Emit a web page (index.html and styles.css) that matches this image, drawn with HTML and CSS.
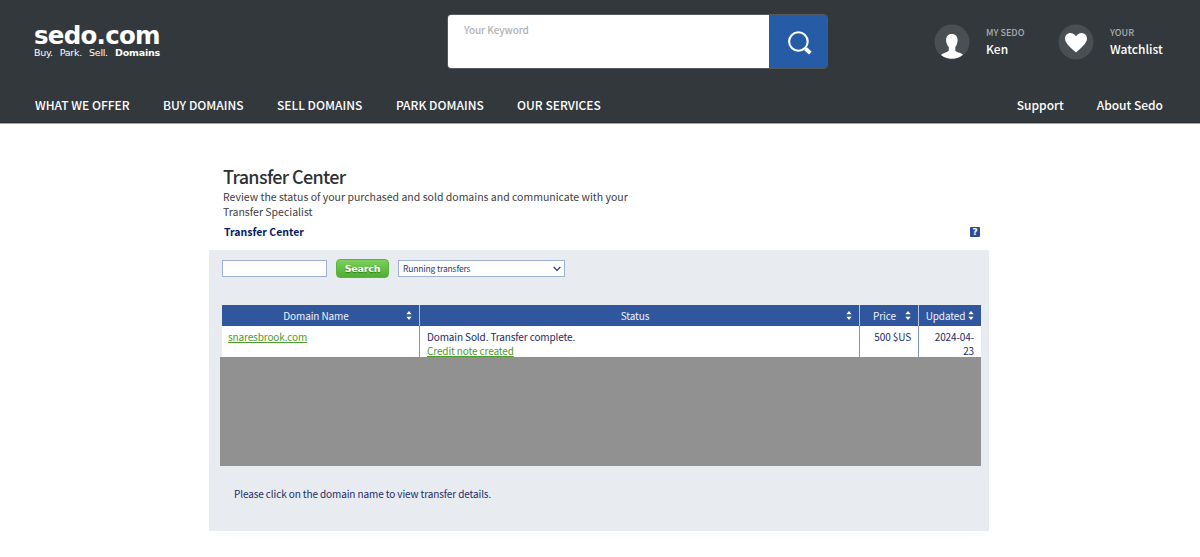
FILE: index.html
```html
<!DOCTYPE html>
<html lang="en">
<head>
<meta charset="utf-8">
<title>Transfer Center</title>
<link rel="stylesheet" href="styles.css">
</head>
<body>
<header class="site-header">
  <div class="masthead">
    <a class="logo"><span class="logo-name">sedo.com</span><span class="logo-tag"><span>Buy.</span><span>Park.</span><span>Sell.</span><b>Domains</b></span></a>
    <form class="keyword-search">
      <label class="keyword-field">Your Keyword</label>
      <button class="keyword-button" type="button" aria-label="Search">
        <svg width="24" height="24" viewBox="0 0 24 24" fill="none" stroke="#fff"><circle cx="10.4" cy="10.5" r="9.3" stroke-width="2.1"/><path d="M17.600 17.700l4.700 4.400" stroke-width="4"/></svg>
      </button>
    </form>
    <div class="account">
      <a class="account-item">
        <svg class="avatar" width="36" height="36" viewBox="0 0 36 36"><circle cx="18" cy="18" r="17.500" fill="#4a4f53"/><path fill="#fff" d="M17.800 10C21.700 10 23.600 12.600 23.600 16c0 3-1 5.600-2.300 7v3.500c.2 1.700 5.400 1.900 7.700 4.300A17.500 17.500 0 0 1 7 31c2.200-2.600 7.500-2.700 7.800-4.500V23c-1.500-1.400-2.700-4-2.700-7 0-3.400 1.800-6 5.700-6z"/></svg>
        <span class="account-text"><small>MY SEDO</small><strong>Ken</strong></span>
      </a>
      <a class="account-item">
        <svg class="avatar" width="36" height="36" viewBox="0 0 36 36"><circle cx="18" cy="18" r="17.500" fill="#4a4f53"/><path fill="#fff" d="M18 28.500C14 25 7 19.800 7 14.600 7 11.200 9.500 9 12.400 9c2.300 0 4.500 1.200 5.600 3.500C19.100 10.200 21.200 9 23.500 9c3 0 5.500 2.200 5.500 5.600 0 5.200-7 10.400-11 13.900z"/></svg>
        <span class="account-text"><small>YOUR</small><strong>Watchlist</strong></span>
      </a>
    </div>
  </div>
  <nav class="main-nav">
    <a class="n1">WHAT WE OFFER</a><a class="n2">BUY DOMAINS</a><a class="n3">SELL DOMAINS</a><a class="n4">PARK DOMAINS</a><a class="n5">OUR SERVICES</a>
    <a class="support">Support</a><a class="about">About Sedo</a>
  </nav>
</header>
<main class="content">
  <h1>Transfer Center</h1>
  <p class="intro">Review the status of your purchased and sold domains and communicate with your<br>Transfer Specialist</p>
  <div class="section-bar"><h2>Transfer Center</h2><span class="help">?</span></div>
  <section class="panel">
    <form class="filters">
      <input class="filter-input" type="text" aria-label="Domain">
      <button class="filter-button" type="button">Search</button>
      <div class="filter-select"><span>Running transfers</span><svg width="8" height="6" viewBox="0 0 8 6" fill="none" stroke="#2c3a6b" stroke-width="1.200"><path d="M.7 1L4 4.500 7.300 1"/></svg></div>
    </form>
    <div class="table">
      <div class="th"><span>Domain Name</span><svg class="sort" viewBox="0 0 6 10"><path d="M.3 3.800L3 .5l2.700 3.300zM.3 6.200h5.400L3 9.500z"/></svg></div>
      <div class="th"><span>Status</span><svg class="sort" viewBox="0 0 6 10"><path d="M.3 3.800L3 .5l2.700 3.300zM.3 6.200h5.400L3 9.500z"/></svg></div>
      <div class="th"><span>Price</span><svg class="sort" viewBox="0 0 6 10"><path d="M.3 3.800L3 .5l2.700 3.300zM.3 6.200h5.400L3 9.500z"/></svg></div>
      <div class="th"><span>Updated</span><svg class="sort" viewBox="0 0 6 10"><path d="M.3 3.800L3 .5l2.700 3.300zM.3 6.200h5.400L3 9.500z"/></svg></div>
      <div class="td"><a class="link">snaresbrook.com</a></div>
      <div class="td status">Domain Sold. Transfer complete.<br><a class="link">Credit note created</a></div>
      <div class="td num">500 $US</div>
      <div class="td num">2024-04-<br>23</div>
    </div>
    <div class="redacted"></div>
    <p class="hint">Please click on the domain name to view transfer details.</p>
  </section>
</main>
</body>
</html>
```
FILE: styles.css
```css
* { box-sizing: border-box; }
body { margin: 0; background: #fff; font-family: "Noto Sans CJK SC", "Noto Sans", sans-serif; font-size: 10px; color: #0b1f66; }
h1, h2, p, form { margin: 0; }
.site-header { height: 123px; background: #33383c; border-bottom: 1px solid #2a2e31; color: #fff; box-shadow: 0 1px 0 #a5a7a9; }
.masthead { display: flex; height: 87px; padding: 14px 0 0 34px; }
.logo { display: flex; flex-direction: column; width: 413px; padding-top: 9px; font-family: "DejaVu Sans", sans-serif; }
.logo-name { font-size: 24.5px; line-height: 25px; font-weight: 700; letter-spacing: -0.75px; white-space: nowrap; }
.logo-tag { display: flex; justify-content: space-between; width: 126px; font-size: 9.5px; line-height: 10px; letter-spacing: -0.3px; }
.logo-tag b { letter-spacing: -0.2px; }
.keyword-search { display: flex; width: 381px; height: 55px; border: 1px solid #54585c; border-radius: 4px; overflow: hidden; }
.keyword-field { flex: 1; background: #fff; padding: 7px 0 0 16px; font-size: 10px; line-height: 16px; font-weight: 500; color: #b2b2b2; letter-spacing: -0.1px; }
.keyword-button { width: 58px; padding: 2px 0 0 3px; border: 0; background: #265ca5; display: flex; align-items: center; justify-content: center; }
.account { display: flex; padding: 10px 0 0 106px; }
.account-item { display: flex; width: 124px; }
.avatar { flex: none; }
.account-text { display: flex; flex-direction: column; padding: 1px 0 0 16px; }
.account-text small { font-size: 9px; line-height: 16px; font-weight: 500; color: #a9acae; }
.account-text strong { font-size: 12px; line-height: 15px; font-weight: 500; white-space: nowrap; }
.main-nav { display: flex; height: 35px; padding: 9px 37px 0 35px; font-size: 12px; line-height: 18px; font-weight: 500; white-space: nowrap; }
.n1 { width: 128px; }
.n2 { width: 114px; }
.n3 { width: 119px; }
.n4 { width: 121px; }
.support { margin-left: auto; margin-right: 33px; }
.content { width: 780px; margin: 41px 0 0 209px; }
h1 { padding-left: 14px; font-size: 18px; line-height: 25px; font-weight: 500; letter-spacing: -0.65px; color: #2d3033; }
.intro { padding-left: 14px; font-size: 10.5px; line-height: 15px; color: #3d4043; }
.section-bar { display: flex; justify-content: space-between; height: 30px; padding: 5px 9px 0 15px; }
h2 { font-size: 10.5px; line-height: 16px; font-weight: 700; color: #061a62; }
.help { width: 10px; height: 10px; margin-top: 3px; border-radius: 1px; background: #2c4b97; color: #fff; font: 700 9px/10px "DejaVu Sans", sans-serif; text-align: center; }
.panel { height: 281px; margin-top: 1px; padding: 9px 9px 0 13px; background: #e8ecf1; }
.filters { display: flex; height: 46px; align-items: flex-start; }
.filter-input { width: 105px; height: 17px; margin-top: 1px; padding: 0 3px; border: 1px solid #9eb2d3; background: #fff; }
.filter-button { width: 53px; height: 19px; margin: 0 9px; padding: 0; border: 1px solid #58b33e; border-radius: 4px; background: linear-gradient(#7bd05c, #4fae31); color: #fff; font: 700 9.5px/15px "DejaVu Sans", sans-serif; letter-spacing: -0.2px; text-shadow: 0 1px 1px #2c7d18; }
.filter-select { display: flex; align-items: center; justify-content: space-between; width: 167px; height: 17px; margin-top: 1px; padding: 0 3px 0 4px; border: 1px solid #9eb2d3; background: #fff; font-size: 8.5px; line-height: 15px; letter-spacing: -0.15px; color: #2c3a6b; }
.table { display: grid; grid-template-columns: 198px 440px 59px 62px; grid-template-rows: 21px 31px; width: 759px; overflow: hidden; background: #fff; color: #1d2b66; font-size: 10px; line-height: 14px; letter-spacing: -0.12px; }
.th { position: relative; display: flex; justify-content: center; background: #30569e; color: #eef3fb; padding-right: 9px; line-height: 21px; border-right: 1px solid #b7c6e2; }
.th:nth-child(4), .td:nth-child(8) { border-right: 0; }
.sort { position: absolute; right: 7px; top: 5px; width: 6px; height: 11px; fill: #fff; }
.td { padding: 4px 7px 0 6px; border-right: 1px solid #7e93c2; }
.status { padding-left: 7px; }
.num { text-align: right; }
.link { color: #4e9a2e; text-decoration: underline; }
.redacted { width: 761px; height: 109px; margin-left: -2px; background: #919191; }
.hint { padding: 20px 0 0 12px; font-size: 10px; line-height: 16px; letter-spacing: -0.11px; color: #1d2b66; }
```
